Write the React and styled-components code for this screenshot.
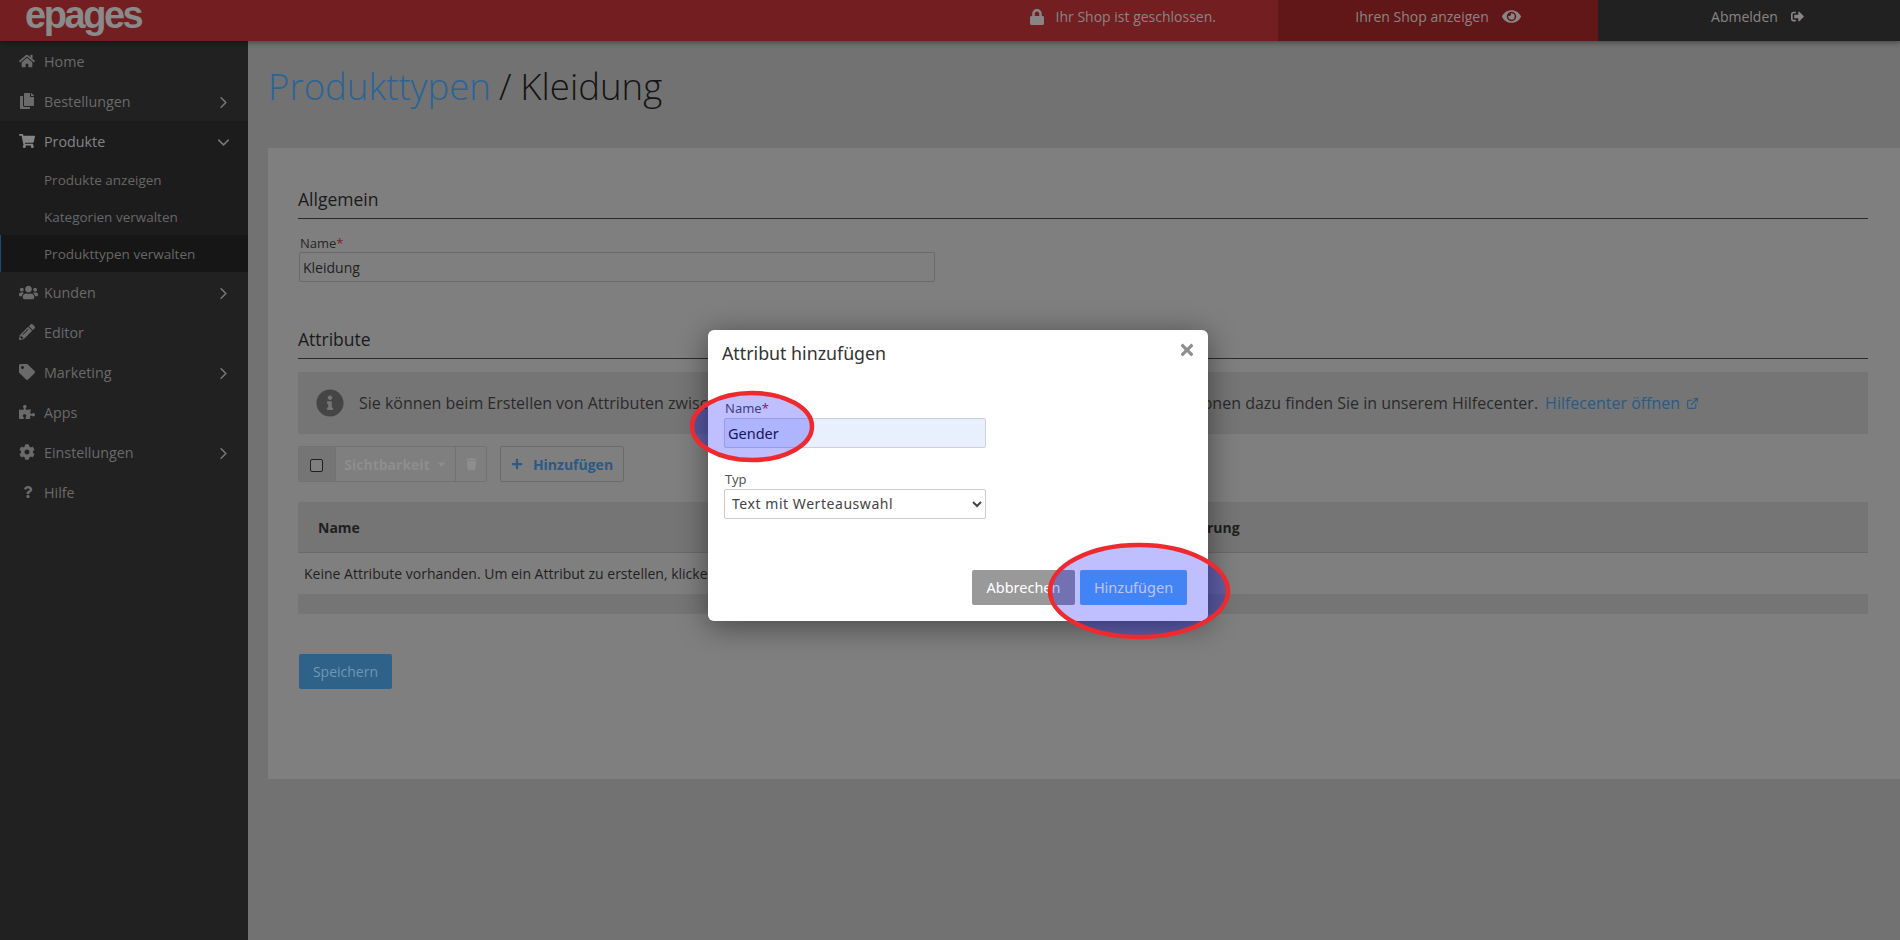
import React from 'react';
import styled, { createGlobalStyle } from 'styled-components';
import { ChevronRight, ChevronDown, ExternalLink } from 'lucide-react';
import {
  FaHome, FaCopy, FaShoppingCart, FaUsers, FaPencilAlt, FaTag, FaPuzzlePiece, FaCog, FaQuestion,
  FaLock, FaEye, FaSignOutAlt, FaInfoCircle, FaTrash, FaPlus, FaCaretDown, FaTimes,
} from 'react-icons/fa';

const Global = createGlobalStyle`
  html, body { margin: 0; padding: 0; height: 100%; overflow: hidden; }
  body { font-family: "Open Sans", "Noto Sans", sans-serif; font-size: 14px; background: #727272; }
  * { box-sizing: border-box; }
`;

const Page = styled.div`
  position: relative; width: 1900px; height: 940px; overflow: hidden;
  display: flex; flex-direction: column; background: #727272;
`;

/* header */
const Header = styled.header`
  height: 41px; flex: none; display: flex; background: #731f22; color: #8a8585;
  box-shadow: 0 2px 5px rgba(0,0,0,.35); position: relative; z-index: 1;
`;
const Logo = styled.div`
  width: 248px; padding-left: 25px; font: bold 38px/38px "Liberation Sans", Arial, sans-serif;
  letter-spacing: -2.45px; color: #8a8a8a; margin-top: -4px; height: 45px;
`;
const Status = styled.div`
  flex: 1; display: flex; align-items: center; justify-content: flex-end; gap: 12px;
  padding: 0 62px 8px 0;
  svg { width: 14px; height: 16px; }
`;
const HeaderLink = styled.div`
  width: ${p => p.$w}px; background: ${p => p.$bg}; display: flex; align-items: center;
  justify-content: center; gap: ${p => p.$gap}px; padding: 0 0 8px ${p => p.$indent || 0}px;
`;

/* body */
const Body = styled.div`flex: 1; display: flex; min-height: 0;`;
const Sidebar = styled.nav`width: 248px; flex: none; background: #212121; color: #6a6a6a;`;
const NavRow = styled.div`
  height: 40px; display: flex; align-items: center; padding: 0 15px 0 19px; font-size: 14.3px;
  color: ${p => p.$active ? '#858585' : '#6a6a6a'};
`;
const NavIcon = styled.span`
  width: 25px; flex: none; display: flex; align-items: center;
  svg { width: ${p => p.$size || 16}px; height: ${p => p.$size || 16}px; margin-left: ${p => p.$inset || 0}px; }
`;
const NavLabel = styled.span`flex: 1;`;
const NavChevron = styled.span`
  display: flex; margin-top: 2px; color: #767676;
  svg { width: 19px; height: 19px; }
`;
const NavGroup = styled.div`background: #1c1c1c;`;
const SubItem = styled.div`
  height: 37px; display: flex; align-items: center; padding-left: ${p => p.$current ? 43 : 44}px;
  font-size: 13.5px; color: #676767;
  ${p => p.$current && 'background: #161616; border-left: 1px solid #1f4a70;'}
`;

const Main = styled.main`flex: 1; display: flex; flex-direction: column; padding-left: 20px;`;
const Title = styled.h1`
  height: 107px; margin: 0; padding-bottom: 17px; display: flex; align-items: center; gap: 9px;
  font-size: 36.6px; font-weight: 300; color: #141414;
`;
const Crumb = styled.span`color: #2a6496; margin-right: -1px;`;
const Card = styled.section`
  height: 631px; background: #7f7f7f; padding: 38px 32px 0 30px; color: #1f1f1f;
`;
const Heading = styled.h2`
  height: 33px; margin: ${p => p.$top || 0}px 0 0; padding-top: 0; font-size: 17.5px; font-weight: 400;
  line-height: 26px; border-bottom: 1px solid #2a2a2a; color: #1a1a1a;
`;
const FieldLabel = styled.label`
  display: block; margin: 16px 0 1px 2px; font-size: 13px; line-height: 16px; color: #262626;
`;
const Required = styled.span`color: #7a1f22;`;
const TextField = styled.input`
  display: block; width: 636px; height: 30px; margin-left: 1px; padding: 1px 3px 0; border: 1px solid #6a6a6a;
  border-radius: 2px; background: #7f7f7f; color: #1f1f1f; font: 14px "Open Sans", sans-serif; outline: none;
`;
const InfoBar = styled.div`
  height: 62px; margin-top: 13px; background: #757575; display: flex; align-items: center;
  padding-left: 18px; font-size: 16px; color: #2a2a2a; white-space: nowrap;
`;
const InfoIcon = styled.span`
  display: flex; margin-right: 15px; color: #454545;
  svg { width: 28px; height: 28px; }
`;
const InfoLink = styled.span`
  display: inline-flex; align-items: center; gap: 6px; margin-left: 7px; color: #2a5a85;
`;
const Toolbar = styled.div`height: 36px; margin-top: 12px; display: flex; gap: 13px;`;
const SegmentGroup = styled.div`
  display: flex; width: 189px; border: 1px solid #727272; border-radius: 2px;
`;
const Segment = styled.div`
  display: flex; align-items: center; justify-content: center; gap: 6px; width: ${p => p.$w}px;
  ${p => p.$fill && 'background: #757575;'}
  ${p => p.$divide && 'border-left: 1px solid #727272;'}
  font-weight: 700; font-size: 14px; color: #8e8e8e;
  svg { width: 11px; height: 12px; }
`;
const Check = styled.input.attrs({ type: 'checkbox' })`
  appearance: none; width: 13px; height: 13px; margin: 2px 2px 0 0; border: 1px solid #1f1f1f;
  border-radius: 2px; background: #7f7f7f;
`;
const AddButton = styled.button`
  width: 124px; display: flex; align-items: center; justify-content: center; gap: 10px; padding: 0;
  background: #7f7f7f; border: 1px solid #6a6a6a; border-radius: 2px; color: #2a5a85;
  font: 700 14px "Open Sans", sans-serif;
  svg { width: 12px; height: 12px; }
`;
const TableHead = styled.div`
  height: 51px; margin-top: 20px; display: flex; align-items: center; background: #757575;
  border-bottom: 1px solid #6a6a6a; font-weight: 700; color: #1f1f1f;
`;
const HeadCell = styled.div`width: ${p => p.$w}px; padding-left: ${p => p.$pad || 0}px;`;
const EmptyRow = styled.div`
  height: 41px; display: flex; align-items: center; padding-left: 6px; color: #1f1f1f;
`;
const TableFoot = styled.div`height: 20px; background: #757575;`;
const SaveButton = styled.button`
  display: block; width: 93px; height: 35px; margin: 40px 0 0 1px; border: 0; border-radius: 2px; padding: 0;
  background: #2f6288; color: #6f98b4; font: 14px "Open Sans", sans-serif;
`;

/* modal */
const ModalLayer = styled.div`
  position: absolute; inset: 0; z-index: 2; display: flex; align-items: flex-start;
  padding: 330px 0 0 708px;
`;
const Modal = styled.div`
  position: relative; width: 500px; height: 291px; background: #fff; border-radius: 6px;
  box-shadow: 0 5px 30px rgba(0,0,0,.45); padding: 0 14px 0 14px; color: #333;
  font-family: "Noto Sans", "Open Sans", sans-serif;
`;
const ModalHead = styled.div`
  height: 46px; display: flex; align-items: center; justify-content: space-between; padding-bottom: 1px;
  margin-bottom: 22px;
`;
const ModalTitle = styled.h3`margin: 0; font-size: 17.8px; font-weight: 400; color: #333;`;
const Close = styled.span`
  display: flex; color: #8f8f8f; margin: -5px -2px 0 0;
  svg { width: 18px; height: 18px; }
`;
const ModalLabel = styled.label`
  display: block; margin: 0 0 0 3px; font-size: 13px; line-height: 20px; color: #555;
`;
const ModalRequired = styled.span`color: #d9232d;`;
const ModalInput = styled.input`
  display: block; width: 262px; height: 30px; margin-left: 2px; padding: 0 3px 1px; border: 1px solid #ccd0d8;
  border-radius: 2px; background: #e8f0fe; color: #222; font: 14.5px "Noto Sans", sans-serif; outline: none;
`;
const ModalSelect = styled.select`
  display: block; width: 262px; height: 30px; margin-left: 2px; padding: 0 3px 2px; border: 1px solid #ccc;
  border-radius: 2px; background: #fff; color: #444; font: 14px "Noto Sans", sans-serif; letter-spacing: .55px;
`;
const Spacer = styled.div`height: ${p => p.$h}px;`;
const ModalFoot = styled.div`
  display: flex; justify-content: flex-end; gap: 5px; margin-top: 51px; padding-right: 7px;
`;
const ModalButton = styled.button`
  width: ${p => p.$w}px; height: 35px; border: 0; border-radius: 2px; padding: 0 0 2px;
  background: ${p => p.$bg}; color: #fff; font: 400 14.5px "Noto Sans", sans-serif;
`;

/* hand-drawn annotations on top of the screenshot */
const Marks = styled.svg`position: absolute; inset: 0; z-index: 3; pointer-events: none;`;

const nav = [
  { icon: FaHome, label: 'Home' },
  { icon: FaCopy, label: 'Bestellungen', more: true },
];
const navAfter = [
  { icon: FaUsers, label: 'Kunden', more: true, size: 19 },
  { icon: FaPencilAlt, label: 'Editor' },
  { icon: FaTag, label: 'Marketing', more: true },
  { icon: FaPuzzlePiece, label: 'Apps' },
  { icon: FaCog, label: 'Einstellungen', more: true },
  { icon: FaQuestion, label: 'Hilfe', size: 12, inset: 3 },
];

const Item = ({ icon: Icon, label, more, active, open, size, inset }) => (
  <NavRow $active={active}>
    <NavIcon $size={size} $inset={inset}><Icon /></NavIcon>
    <NavLabel>{label}</NavLabel>
    {more && <NavChevron><ChevronRight /></NavChevron>}
    {open && <NavChevron><ChevronDown /></NavChevron>}
  </NavRow>
);

export default function App() {
  return (
    <Page>
      <Global />
      <Header>
        <Logo>epages</Logo>
        <Status><FaLock /><span>Ihr Shop ist geschlossen.</span></Status>
        <HeaderLink $w={320} $bg="#611718" $gap={13}>Ihren Shop anzeigen <FaEye size={19} /></HeaderLink>
        <HeaderLink $w={302} $bg="#212121" $gap={13} $indent={17}>Abmelden <FaSignOutAlt size={13} /></HeaderLink>
      </Header>
      <Body>
        <Sidebar>
          {nav.map(n => <Item key={n.label} {...n} />)}
          <NavGroup>
            <Item icon={FaShoppingCart} label="Produkte" active open />
            <SubItem>Produkte anzeigen</SubItem>
            <SubItem>Kategorien verwalten</SubItem>
            <SubItem $current>Produkttypen verwalten</SubItem>
          </NavGroup>
          {navAfter.map(n => <Item key={n.label} {...n} />)}
        </Sidebar>
        <Main>
          <Title><Crumb>Produkttypen</Crumb><span>/</span><span>Kleidung</span></Title>
          <Card>
            <Heading>Allgemein</Heading>
            <FieldLabel>Name<Required>*</Required></FieldLabel>
            <TextField defaultValue="Kleidung" />
            <Heading $top={44}>Attribute</Heading>
            <InfoBar>
              <InfoIcon><FaInfoCircle /></InfoIcon>
              Sie können beim Erstellen von Attributen zwischen mehreren Typen wie Zahl oder Text wählen. Weitere Informationen dazu finden Sie in unserem Hilfecenter.
              <InfoLink>Hilfecenter öffnen <ExternalLink size={13} /></InfoLink>
            </InfoBar>
            <Toolbar>
              <SegmentGroup>
                <Segment $w={36} $fill><Check /></Segment>
                <Segment $w={120} $divide>Sichtbarkeit <FaCaretDown /></Segment>
                <Segment $w={31} $divide><FaTrash /></Segment>
              </SegmentGroup>
              <AddButton><FaPlus /> Hinzufügen</AddButton>
            </Toolbar>
            <TableHead>
              <HeadCell $w={873} $pad={20}>Name</HeadCell>
              <HeadCell $w={200}>Änderung</HeadCell>
            </TableHead>
            <EmptyRow>Keine Attribute vorhanden. Um ein Attribut zu erstellen, klicken Sie auf Hinzufügen.</EmptyRow>
            <TableFoot />
            <SaveButton>Speichern</SaveButton>
          </Card>
        </Main>
      </Body>
      <ModalLayer>
        <Modal>
          <ModalHead>
            <ModalTitle>Attribut hinzufügen</ModalTitle>
            <Close><FaTimes /></Close>
          </ModalHead>
          <ModalLabel>Name<ModalRequired>*</ModalRequired></ModalLabel>
          <ModalInput defaultValue="Gender" />
          <Spacer $h={21} />
          <ModalLabel>Typ</ModalLabel>
          <ModalSelect defaultValue="a"><option value="a">Text mit Werteauswahl</option></ModalSelect>
          <ModalFoot>
            <ModalButton $w={103} $bg="#999999">Abbrechen</ModalButton>
            <ModalButton $w={107} $bg="#58b1f0">Hinzufügen</ModalButton>
          </ModalFoot>
        </Modal>
      </ModalLayer>
      <Marks width="1900" height="940" viewBox="0 0 1900 940">
        <ellipse cx="752" cy="426.5" rx="60" ry="33.5" fill="rgba(0,0,255,.25)" stroke="#ee2a2e" strokeWidth="4.5" />
        <ellipse cx="1139" cy="591" rx="89" ry="46" fill="rgba(0,0,255,.25)" stroke="#ee2a2e" strokeWidth="4.5" />
      </Marks>
    </Page>
  );
}
